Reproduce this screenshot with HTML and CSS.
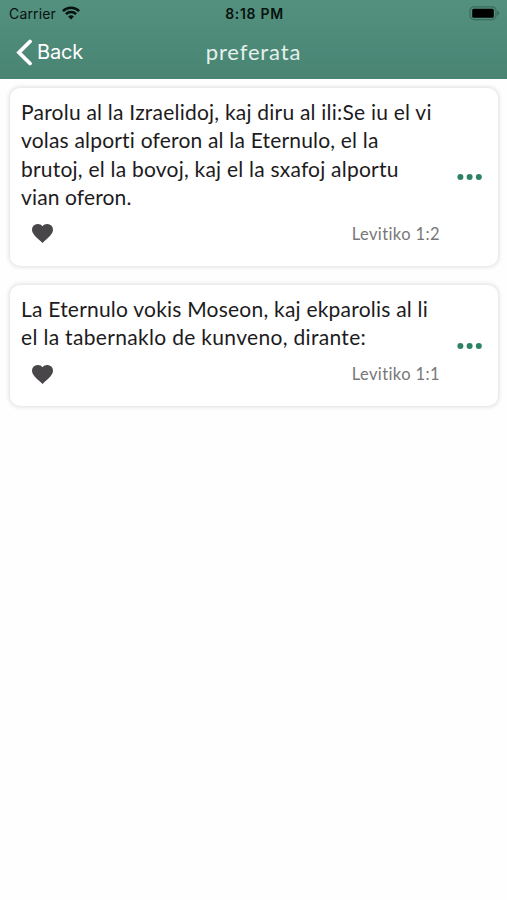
FILE: index.html
```html
<!DOCTYPE html>
<html lang="eo">
<head>
<meta charset="utf-8">
<title>preferata</title>
<link rel="stylesheet" href="styles.css">
</head>
<body>
<header class="top">
  <div class="status">
    <div class="carrier"><span>Carrier</span>
      <svg width="18" height="14" viewBox="0 0 18 14" fill="none" stroke="#07120f" stroke-width="2.5"><path d="M.9 5.1a11.5 11.5 0 0 1 16.2 0M3.9 8.2a7.2 7.2 0 0 1 10.2 0"/><path d="M9 13.5 6.1 10.6a4.1 4.1 0 0 1 5.8 0z" fill="#07120f" stroke="none"/></svg>
    </div>
    <time class="clock">8:18 PM</time>
    <svg class="battery" width="31" height="15" viewBox="0 0 31 15"><rect x="1" y=".8" width="26" height="12.800" rx="4" fill="none" stroke="#3b6c5d" stroke-width="1.2"/><rect x="3.200" y="2.7" width="21.600" height="9" rx="1.500" fill="#000"/><path d="M28.2 4.5q2.2 1 2.2 2.6t-2.2 2.6z" fill="#3b6c5d"/></svg>
  </div>
  <nav class="nav">
    <a class="back"><svg width="17" height="27" viewBox="0 0 17 27"><path d="M15 2.500 4 13.500l11 11" fill="none" stroke="#fff" stroke-width="3.800" stroke-linecap="round"/></svg><span>Back</span></a>
    <h1 class="title">preferata</h1>
  </nav>
</header>
<main class="list">
  <article class="card">
    <div class="body">
      <p class="verse"><span class="l1">Parolu al la Izraelidoj, kaj diru al ili:Se iu el vi</span><span class="l2">volas alporti oferon al la Eternulo, el la</span><span class="l3">brutoj, el la bovoj, kaj el la sxafoj alportu</span><span class="l4">vian oferon.</span></p>
      <div class="meta"><svg width="21" height="19" viewBox="0 0 21 19"><path d="M10.5 19 9 17.6C3.6 12.7 0 9.5 0 5.5A5.6 5.6 0 0 1 5.7 0c1.9 0 3.7.8 4.8 2.2C11.6.8 13.4 0 15.3 0A5.6 5.6 0 0 1 21 5.500c0 4-3.600 7.200-9 12.100z" fill="#484648"/></svg><span class="ref">Levitiko 1:2</span></div>
    </div>
    <svg class="more" width="26" height="6" viewBox="0 0 26 6" fill="#2d8266"><circle cx="3.400" cy="3" r="3"/><circle cx="12.600" cy="3" r="3"/><circle cx="21.800" cy="3" r="3"/></svg>
  </article>
  <article class="card">
    <div class="body">
      <p class="verse"><span class="l5">La Eternulo vokis Moseon, kaj ekparolis al li</span><span class="l6">el la tabernaklo de kunveno, dirante:</span></p>
      <div class="meta"><svg width="21" height="19" viewBox="0 0 21 19"><path d="M10.5 19 9 17.6C3.6 12.7 0 9.5 0 5.5A5.6 5.6 0 0 1 5.7 0c1.9 0 3.7.8 4.8 2.2C11.6.8 13.4 0 15.3 0A5.6 5.6 0 0 1 21 5.500c0 4-3.600 7.200-9 12.100z" fill="#484648"/></svg><span class="ref">Levitiko 1:1</span></div>
    </div>
    <svg class="more" width="26" height="6" viewBox="0 0 26 6" fill="#2d8266"><circle cx="3.400" cy="3" r="3"/><circle cx="12.600" cy="3" r="3"/><circle cx="21.800" cy="3" r="3"/></svg>
  </article>
</main>
</body>
</html>
```
FILE: styles.css
```css
* { box-sizing: border-box; }
body { margin: 0; min-height: 900px; background: #fefefe; font-family: Lato, "Open Sans", sans-serif; font-variant-ligatures: none; }
svg { display: block; flex: none; }
.top { height: 79px; background: linear-gradient(#53917e, #498473); }
.status { height: 27px; padding: 0 7px 0 9px; display: grid; grid-template-columns: 1fr auto 1fr; align-items: center; font-family: Inter, "Liberation Sans", sans-serif; color: #07120f; }
.carrier { display: flex; align-items: center; gap: 6px; font-size: 14px; }
.carrier span { letter-spacing: .15px; }
.carrier svg { margin-top: -2px; }
.clock { font-size: 14px; font-weight: 600; letter-spacing: .7px; }
.battery { justify-self: end; }
.nav { height: 50px; padding-left: 15px; display: grid; grid-template-columns: 1fr auto 1fr; align-items: center; color: #fff; }
.back { display: flex; align-items: center; gap: 5px; font: 20px/26px Inter, sans-serif; letter-spacing: -.2px; }
.title { margin: 0 15px 0 0; font-size: 22px; line-height: 28px; font-weight: 400; letter-spacing: .85px; color: #e4f0ec; }
.list { padding: 9px 9px 0 10px; display: grid; gap: 19px; }
.card { display: flex; align-items: center; justify-content: space-between; padding: 10px 15px 18px 11px; border-radius: 10px; background: #fff; box-shadow: 0 0 4px 1px rgba(0,0,0,.13); }
.card + .card { padding-bottom: 17px; }
.body { width: 420px; }
.verse { margin: 0; font-size: 21px; line-height: 28.3px; letter-spacing: .22px; color: #1d1b1d; white-space: nowrap; }
.verse span { display: block; width: max-content; }
.verse .l2 { letter-spacing: .19px; }
.verse .l4 { letter-spacing: .13px; }
.verse .l6 { letter-spacing: .32px; }
.meta { height: 37px; padding: 8px 1px 0 11px; display: flex; align-items: center; justify-content: space-between; }
.ref { font-size: 16.5px; line-height: 22px; letter-spacing: .4px; color: #777; }
.more { margin-top: 8px; }
```
